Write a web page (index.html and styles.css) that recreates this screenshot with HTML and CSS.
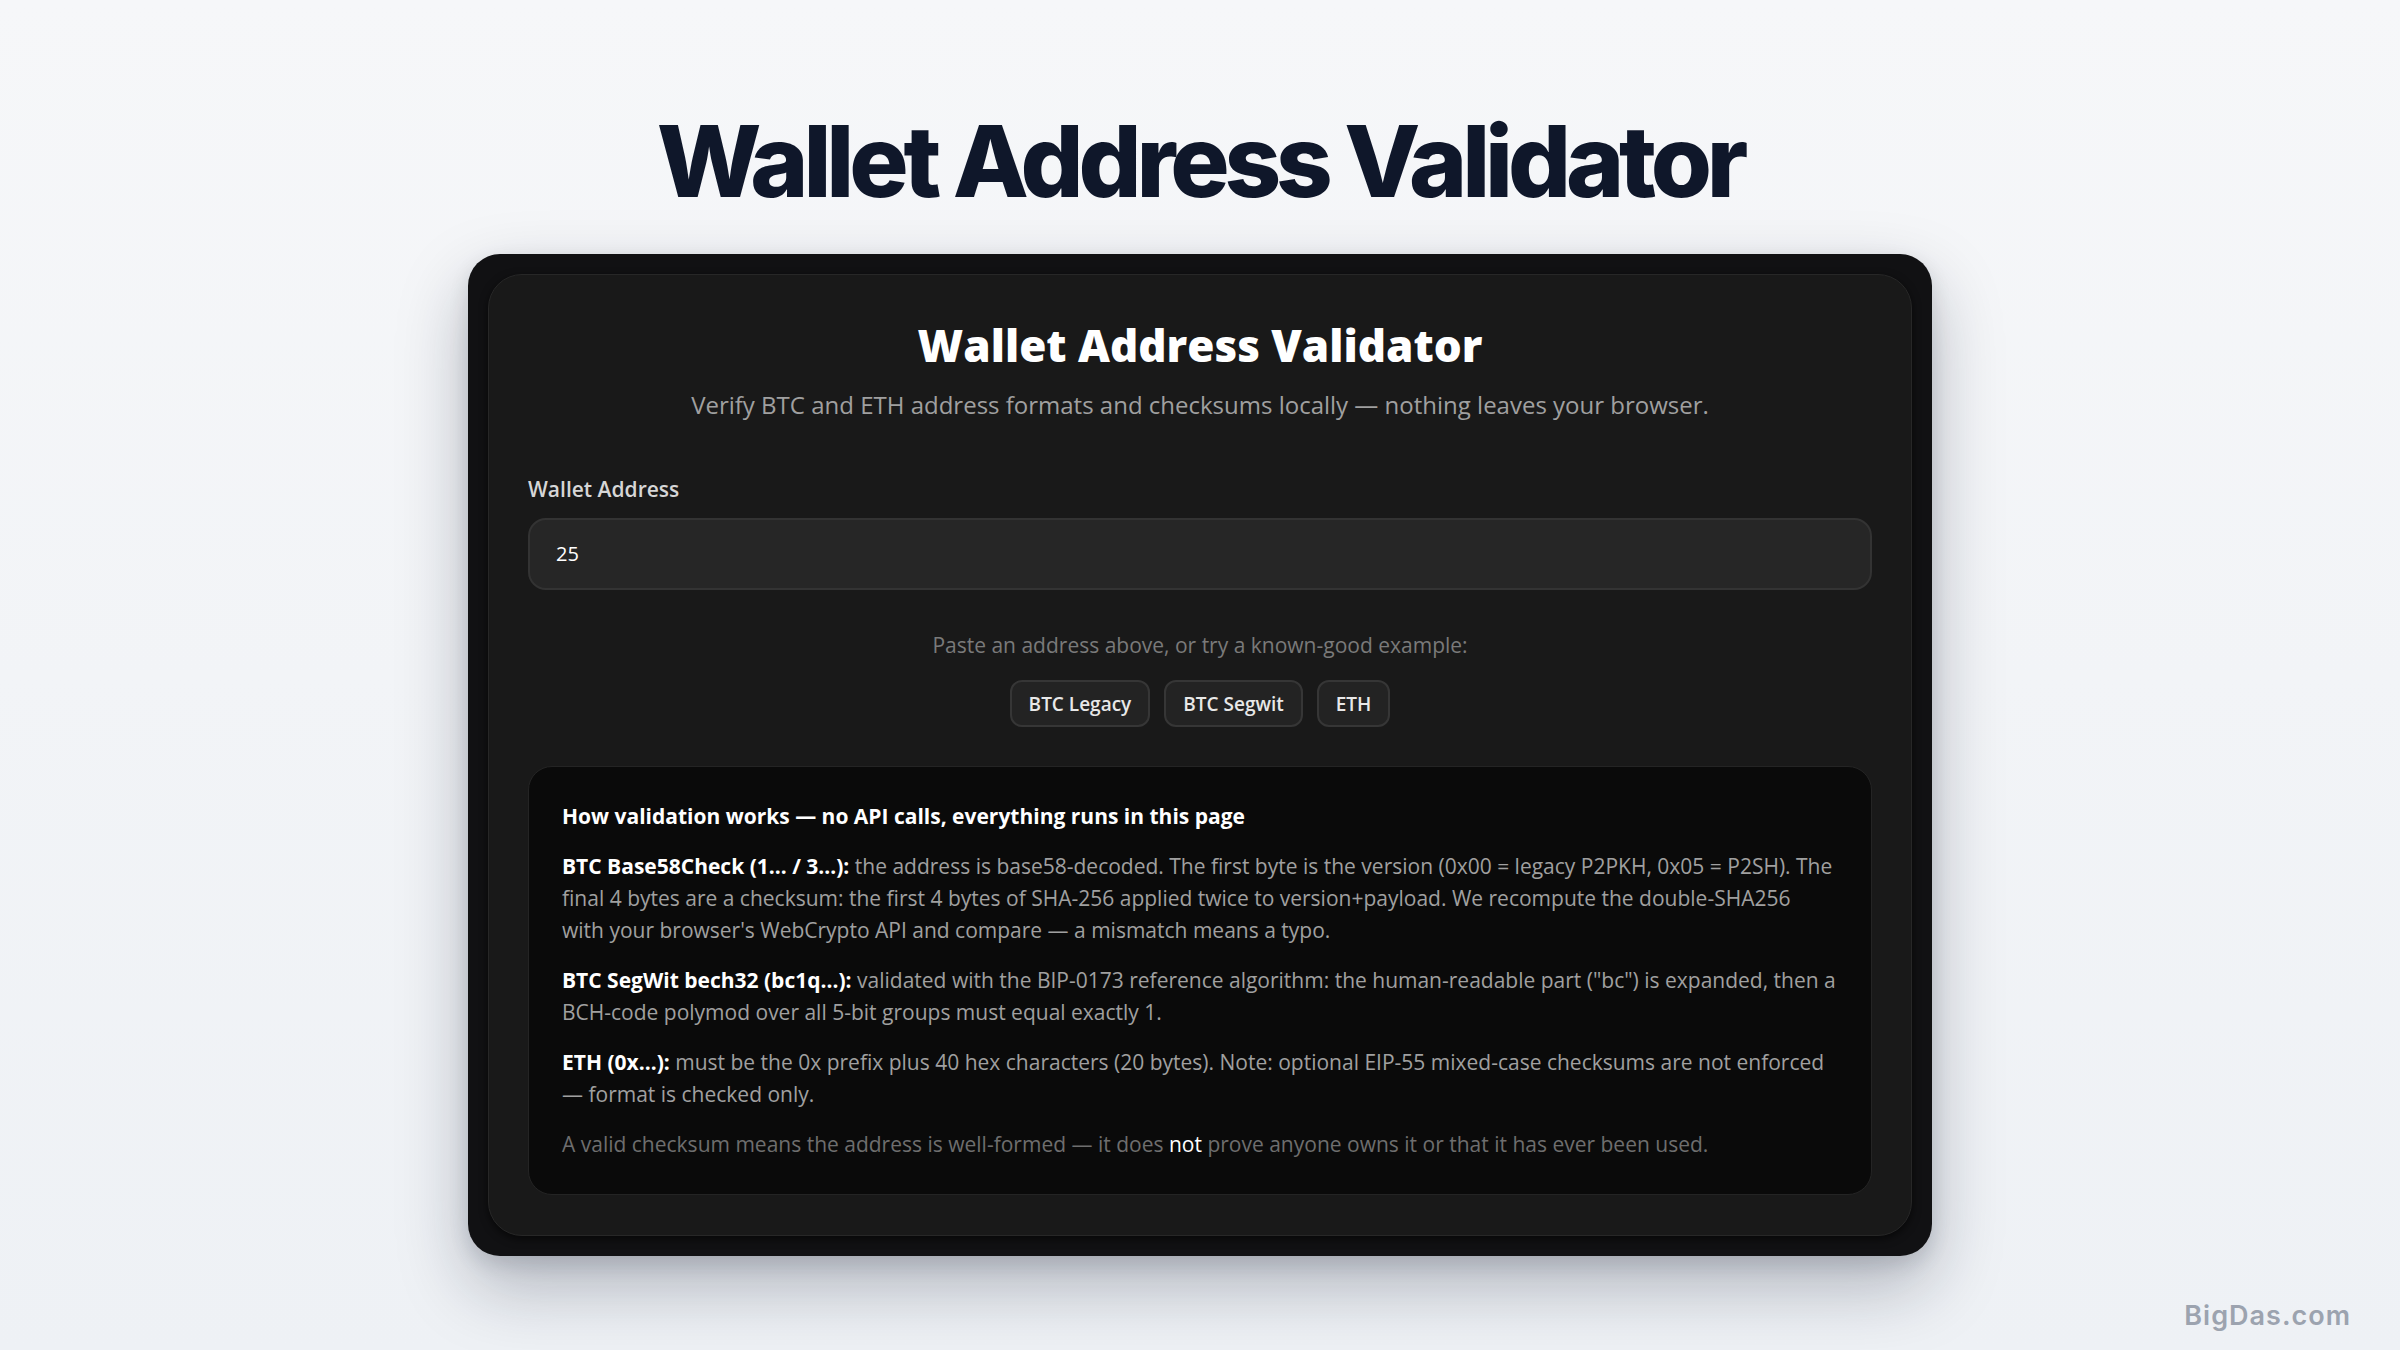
FILE: index.html
```html
<!DOCTYPE html>
<html lang="en">
<head>
<meta charset="utf-8">
<title>Wallet Address Validator</title>
<link rel="stylesheet" href="styles.css">
</head>
<body>
<main class="page">
  <h1 class="page-title">Wallet Address Validator</h1>
  <section class="frame">
    <div class="card">
      <h2 class="card-title">Wallet Address Validator</h2>
      <p class="card-sub">Verify BTC and ETH address formats and checksums locally — nothing leaves your browser.</p>
      <label class="field-label" for="addr">Wallet Address</label>
      <input class="field-input" id="addr" type="text" value="25">
      <p class="hint">Paste an address above, or try a known-good example:</p>
      <div class="examples">
        <button class="chip" type="button">BTC Legacy</button>
        <button class="chip" type="button">BTC Segwit</button>
        <button class="chip" type="button">ETH</button>
      </div>
      <div class="info">
        <p class="info-title">How validation works — no API calls, everything runs in this page</p>
        <p><strong>BTC Base58Check (1… / 3…):</strong> the address is base58-decoded. The first byte is the version (0x00 = legacy P2PKH, 0x05 = P2SH). The final 4 bytes are a checksum: the first 4 bytes of SHA-256 applied twice to version+payload. We recompute the double-SHA256 with&nbsp;your browser's WebCrypto API and compare — a mismatch means a typo.</p>
        <p><strong>BTC SegWit bech32 (bc1q…):</strong> validated with the BIP-0173 reference algorithm: the human-readable part ("bc") is expanded, then a BCH-code polymod over all 5-bit groups must equal exactly 1.</p>
        <p><strong>ETH (0x…):</strong> must be the 0x prefix plus 40 hex characters (20 bytes). Note: optional EIP-55 mixed-case checksums are not enforced — format is checked only.</p>
        <p class="info-note">A valid checksum means the address is well-formed — it does <span class="emph">not</span> prove anyone owns it or that it has ever been used.</p>
      </div>
    </div>
  </section>
</main>
<div class="watermark">BigDas.com</div>
</body>
</html>
```

FILE: styles.css
```css
* { box-sizing: border-box; }

html, body { margin: 0; padding: 0; }

body {
  min-height: 100vh;
  background: linear-gradient(180deg, #f6f7f9 0%, #eef1f5 100%);
  font-family: "Open Sans", "Noto Sans", sans-serif;
  position: relative;
}

.page {
  display: flex;
  flex-direction: column;
  align-items: center;
  padding-top: 102px;
}

.page-title {
  margin: 0 0 33px;
  font-family: Inter, "Open Sans", sans-serif;
  font-weight: 800;
  font-size: 99px;
  line-height: 1.2;
  letter-spacing: -0.052em;
  color: #0f172a;
}

.frame {
  width: 1464px;
  padding: 20px;
  background: #111113;
  border-radius: 32px;
  box-shadow: 0 30px 70px rgba(15, 23, 42, 0.28), 0 8px 20px rgba(15, 23, 42, 0.12);
}

.card {
  display: flex;
  flex-direction: column;
  background: #191919;
  border: 1px solid #272727;
  border-radius: 34px;
  padding: 44px 39px 40px;
  box-shadow: 0 3px 8px rgba(0, 0, 0, 0.6);
}

.card-title {
  margin: 0;
  text-align: center;
  font-size: 44px;
  font-weight: 800;
  line-height: 1.2;
  color: #ffffff;
}

.card-sub {
  margin: 15px 0 0;
  text-align: center;
  font-size: 24px;
  line-height: 1.5;
  color: #a0a0a0;
}

.field-label {
  margin-top: 52px;
  font-size: 21px;
  font-weight: 600;
  line-height: 1.4;
  color: #d6d6d6;
}

.field-input {
  margin-top: 14px;
  height: 72px;
  padding: 0 26px;
  background: #262626;
  border: 2px solid #333333;
  border-radius: 18px;
  font-family: inherit;
  font-size: 20px;
  color: #ffffff;
  outline: none;
}

.hint {
  margin: 40px 0 0;
  text-align: center;
  font-size: 21px;
  line-height: 1.5;
  color: #7a7a7a;
}

.examples {
  display: flex;
  justify-content: center;
  gap: 14px;
  margin-top: 19px;
}

.chip {
  height: 47px;
  padding: 0 17px;
  background: #232323;
  border: 2px solid #363636;
  border-radius: 12px;
  font-family: inherit;
  font-size: 19px;
  font-weight: 600;
  color: #e8e8e8;
}

.info {
  margin-top: 39px;
  background: #0a0a0a;
  border: 1px solid #242424;
  border-radius: 24px;
  padding: 33px 33px 34px;
}

.info p {
  margin: 0 0 18px;
  font-size: 21px;
  line-height: 32px;
  color: #a0a0a0;
}

.info p:last-child { margin-bottom: 0; }

.info .info-title {
  color: #ffffff;
  font-weight: 700;
}

.info strong {
  color: #ffffff;
  font-weight: 700;
}

.info .info-note { color: #6e6e6e; }

.emph { color: #ffffff; }

.watermark {
  position: absolute;
  right: 49px;
  bottom: 18px;
  font-family: Inter, sans-serif;
  font-size: 27px;
  font-weight: 600;
  letter-spacing: 1px;
  color: #9ca3af;
}
```
